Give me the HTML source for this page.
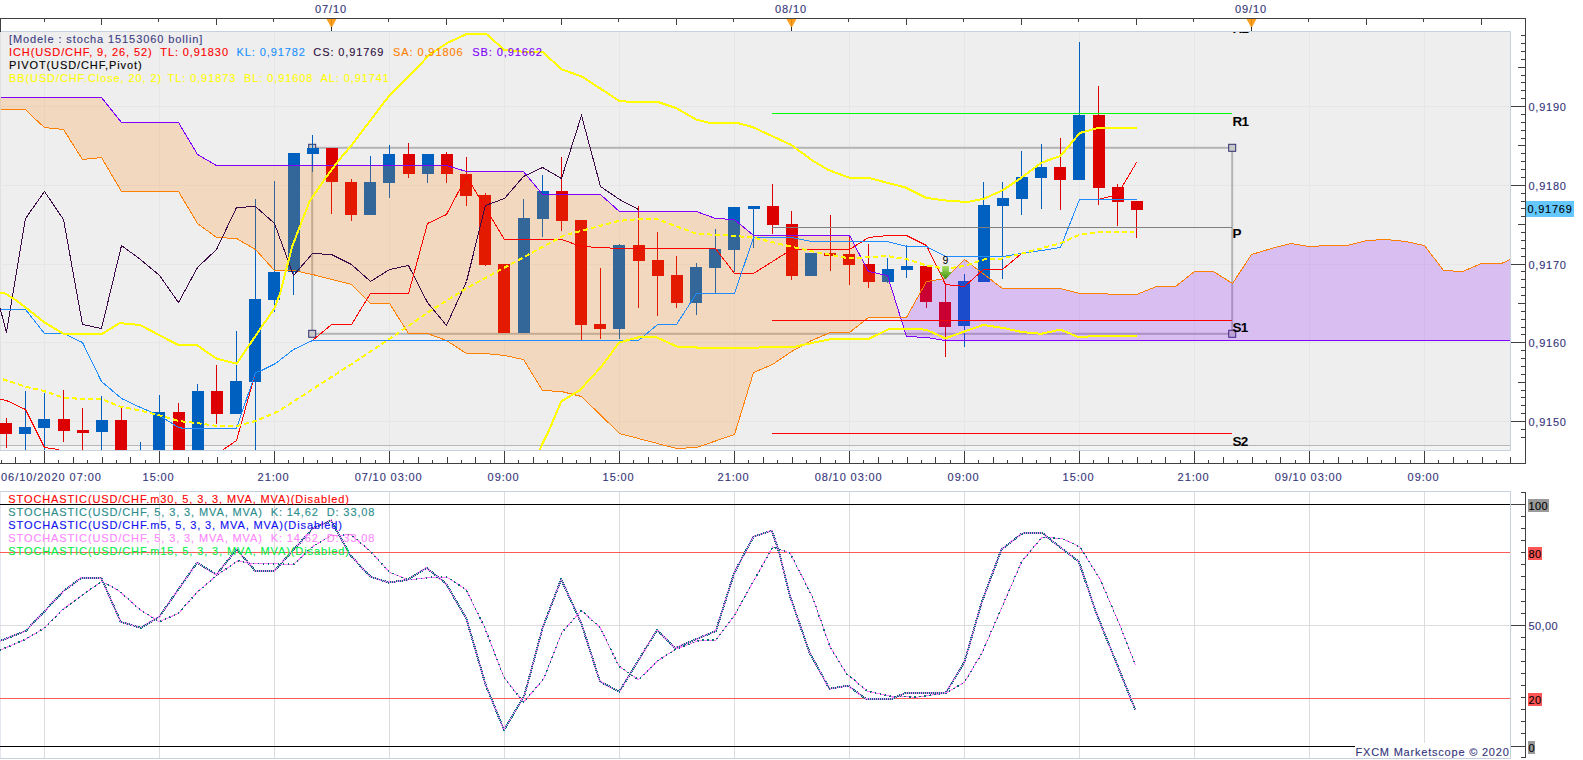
<!DOCTYPE html>
<html><head><meta charset="utf-8"><title>chart</title>
<style>
html,body{margin:0;padding:0;background:#fff;width:1583px;height:760px;overflow:hidden;position:relative}
.t{position:absolute;white-space:pre;font-family:"Liberation Sans",sans-serif;line-height:1;-webkit-text-stroke:0.12px currentColor}
.c{text-align:center}
</style></head><body>
<svg width="1583" height="760" viewBox="0 0 1583 760" style="position:absolute;left:0;top:0" font-family='"Liberation Sans", sans-serif'>
<defs><clipPath id="pc"><rect x="0" y="31" width="1510" height="419"/></clipPath><linearGradient id="ag" x1="0" y1="0" x2="0" y2="1"><stop offset="0" stop-color="#a8e060"/><stop offset="1" stop-color="#3c9010"/></linearGradient></defs>
<rect x="0" y="31" width="1510" height="419" fill="#eeeeee"/>
<rect x="0" y="446" width="1510" height="4" fill="#f4f4f4"/>
<line x1="0.5" y1="32" x2="0.5" y2="450" stroke="#e0e0e0" stroke-width="1"/>
<line x1="44.5" y1="31" x2="44.5" y2="450" stroke="#e6e6e6" stroke-width="1"/>
<line x1="159.5" y1="31" x2="159.5" y2="450" stroke="#e6e6e6" stroke-width="1"/>
<line x1="274.5" y1="31" x2="274.5" y2="450" stroke="#e6e6e6" stroke-width="1"/>
<line x1="389.5" y1="31" x2="389.5" y2="450" stroke="#e6e6e6" stroke-width="1"/>
<line x1="504.5" y1="31" x2="504.5" y2="450" stroke="#e6e6e6" stroke-width="1"/>
<line x1="619.5" y1="31" x2="619.5" y2="450" stroke="#e6e6e6" stroke-width="1"/>
<line x1="734.5" y1="31" x2="734.5" y2="450" stroke="#e6e6e6" stroke-width="1"/>
<line x1="849.5" y1="31" x2="849.5" y2="450" stroke="#e6e6e6" stroke-width="1"/>
<line x1="964.5" y1="31" x2="964.5" y2="450" stroke="#e6e6e6" stroke-width="1"/>
<line x1="1079.5" y1="31" x2="1079.5" y2="450" stroke="#e6e6e6" stroke-width="1"/>
<line x1="1194.5" y1="31" x2="1194.5" y2="450" stroke="#e6e6e6" stroke-width="1"/>
<line x1="1309.5" y1="31" x2="1309.5" y2="450" stroke="#e6e6e6" stroke-width="1"/>
<line x1="1424.5" y1="31" x2="1424.5" y2="450" stroke="#e6e6e6" stroke-width="1"/>
<line x1="0" y1="106.5" x2="1510" y2="106.5" stroke="#e6e6e6" stroke-width="1"/>
<line x1="0" y1="185.5" x2="1510" y2="185.5" stroke="#e6e6e6" stroke-width="1"/>
<line x1="0" y1="264.5" x2="1510" y2="264.5" stroke="#e6e6e6" stroke-width="1"/>
<line x1="0" y1="342.5" x2="1510" y2="342.5" stroke="#e6e6e6" stroke-width="1"/>
<line x1="0" y1="421.5" x2="1510" y2="421.5" stroke="#e6e6e6" stroke-width="1"/>
<line x1="0" y1="445.5" x2="1510" y2="445.5" stroke="#b8b8b8" stroke-width="1"/>
<g clip-path="url(#pc)">
<g stroke="#b4b4b4" stroke-width="2" fill="none"><rect x="312.2" y="147.8" width="920" height="186"/></g>
<rect x="308.7" y="144.3" width="7" height="7" fill="#c8c8c8" stroke="#303070" stroke-width="1"/>
<rect x="1228.7" y="144.3" width="7" height="7" fill="#c8c8c8" stroke="#303070" stroke-width="1"/>
<rect x="308.7" y="330.3" width="7" height="7" fill="#c8c8c8" stroke="#303070" stroke-width="1"/>
<rect x="1228.7" y="330.3" width="7" height="7" fill="#c8c8c8" stroke="#303070" stroke-width="1"/>
<rect x="6" y="418" width="1" height="30" fill="#dd0000"/>
<rect x="0" y="423" width="12" height="11" fill="#dd0000"/>
<rect x="25" y="391" width="1" height="60" fill="#0060c0"/>
<rect x="19" y="427" width="12" height="7" fill="#0060c0"/>
<rect x="44" y="393" width="1" height="58" fill="#0060c0"/>
<rect x="38" y="419" width="12" height="9" fill="#0060c0"/>
<rect x="63" y="390" width="1" height="52" fill="#dd0000"/>
<rect x="58" y="419" width="12" height="12" fill="#dd0000"/>
<rect x="82" y="408" width="1" height="43" fill="#dd0000"/>
<rect x="77" y="430" width="12" height="3" fill="#dd0000"/>
<rect x="101" y="396" width="1" height="55" fill="#0060c0"/>
<rect x="96" y="420" width="12" height="12" fill="#0060c0"/>
<rect x="121" y="408" width="1" height="43" fill="#dd0000"/>
<rect x="115" y="420" width="12" height="31" fill="#dd0000"/>
<rect x="140" y="442" width="1" height="9" fill="#0060c0"/>
<rect x="134" y="451" width="12" height="3" fill="#0060c0"/>
<rect x="159" y="395" width="1" height="56" fill="#0060c0"/>
<rect x="153" y="412" width="12" height="39" fill="#0060c0"/>
<rect x="178" y="403" width="1" height="48" fill="#dd0000"/>
<rect x="173" y="412" width="12" height="39" fill="#dd0000"/>
<rect x="197" y="384" width="1" height="67" fill="#0060c0"/>
<rect x="192" y="391" width="12" height="60" fill="#0060c0"/>
<rect x="216" y="365" width="1" height="59" fill="#dd0000"/>
<rect x="211" y="391" width="12" height="23" fill="#dd0000"/>
<rect x="236" y="331" width="1" height="83" fill="#0060c0"/>
<rect x="230" y="381" width="12" height="33" fill="#0060c0"/>
<rect x="255" y="199" width="1" height="252" fill="#0060c0"/>
<rect x="249" y="299" width="12" height="83" fill="#0060c0"/>
<rect x="274" y="181" width="1" height="131" fill="#0060c0"/>
<rect x="268" y="272" width="12" height="28" fill="#0060c0"/>
<rect x="293" y="153" width="1" height="142" fill="#0060c0"/>
<rect x="288" y="153" width="12" height="119" fill="#0060c0"/>
<rect x="312" y="135" width="1" height="37" fill="#0060c0"/>
<rect x="307" y="148" width="12" height="6" fill="#0060c0"/>
<rect x="331" y="148" width="1" height="66" fill="#dd0000"/>
<rect x="326" y="148" width="12" height="34" fill="#dd0000"/>
<rect x="351" y="179" width="1" height="42" fill="#dd0000"/>
<rect x="345" y="182" width="12" height="33" fill="#dd0000"/>
<rect x="370" y="156" width="1" height="59" fill="#0060c0"/>
<rect x="364" y="182" width="12" height="33" fill="#0060c0"/>
<rect x="389" y="145" width="1" height="53" fill="#0060c0"/>
<rect x="383" y="154" width="12" height="29" fill="#0060c0"/>
<rect x="408" y="143" width="1" height="35" fill="#dd0000"/>
<rect x="403" y="154" width="12" height="20" fill="#dd0000"/>
<rect x="427" y="154" width="1" height="29" fill="#0060c0"/>
<rect x="422" y="154" width="12" height="20" fill="#0060c0"/>
<rect x="446" y="152" width="1" height="31" fill="#dd0000"/>
<rect x="441" y="154" width="12" height="20" fill="#dd0000"/>
<rect x="466" y="157" width="1" height="49" fill="#dd0000"/>
<rect x="460" y="174" width="12" height="22" fill="#dd0000"/>
<rect x="485" y="193" width="1" height="73" fill="#dd0000"/>
<rect x="479" y="195" width="12" height="70" fill="#dd0000"/>
<rect x="504" y="264" width="1" height="69" fill="#dd0000"/>
<rect x="498" y="264" width="12" height="69" fill="#dd0000"/>
<rect x="523" y="199" width="1" height="134" fill="#0060c0"/>
<rect x="518" y="218" width="12" height="115" fill="#0060c0"/>
<rect x="542" y="175" width="1" height="62" fill="#0060c0"/>
<rect x="537" y="191" width="12" height="28" fill="#0060c0"/>
<rect x="561" y="157" width="1" height="74" fill="#dd0000"/>
<rect x="556" y="191" width="12" height="30" fill="#dd0000"/>
<rect x="581" y="220" width="1" height="120" fill="#dd0000"/>
<rect x="575" y="220" width="12" height="105" fill="#dd0000"/>
<rect x="600" y="268" width="1" height="71" fill="#dd0000"/>
<rect x="594" y="324" width="12" height="5" fill="#dd0000"/>
<rect x="619" y="244" width="1" height="95" fill="#0060c0"/>
<rect x="613" y="245" width="12" height="84" fill="#0060c0"/>
<rect x="638" y="206" width="1" height="102" fill="#dd0000"/>
<rect x="633" y="245" width="12" height="16" fill="#dd0000"/>
<rect x="657" y="232" width="1" height="84" fill="#dd0000"/>
<rect x="652" y="260" width="12" height="16" fill="#dd0000"/>
<rect x="676" y="256" width="1" height="52" fill="#dd0000"/>
<rect x="671" y="275" width="12" height="28" fill="#dd0000"/>
<rect x="696" y="263" width="1" height="52" fill="#0060c0"/>
<rect x="690" y="267" width="12" height="36" fill="#0060c0"/>
<rect x="715" y="229" width="1" height="64" fill="#0060c0"/>
<rect x="709" y="249" width="12" height="19" fill="#0060c0"/>
<rect x="734" y="207" width="1" height="65" fill="#0060c0"/>
<rect x="728" y="207" width="12" height="43" fill="#0060c0"/>
<rect x="753" y="207" width="1" height="41" fill="#0060c0"/>
<rect x="748" y="206" width="12" height="3" fill="#0060c0"/>
<rect x="772" y="184" width="1" height="50" fill="#dd0000"/>
<rect x="767" y="206" width="12" height="19" fill="#dd0000"/>
<rect x="791" y="211" width="1" height="69" fill="#dd0000"/>
<rect x="786" y="224" width="12" height="52" fill="#dd0000"/>
<rect x="811" y="253" width="1" height="23" fill="#0060c0"/>
<rect x="805" y="253" width="12" height="23" fill="#0060c0"/>
<rect x="830" y="215" width="1" height="56" fill="#dd0000"/>
<rect x="824" y="253" width="12" height="3" fill="#dd0000"/>
<rect x="849" y="235" width="1" height="50" fill="#dd0000"/>
<rect x="843" y="254" width="12" height="11" fill="#dd0000"/>
<rect x="868" y="244" width="1" height="44" fill="#dd0000"/>
<rect x="863" y="264" width="12" height="18" fill="#dd0000"/>
<rect x="887" y="258" width="1" height="25" fill="#0060c0"/>
<rect x="882" y="269" width="12" height="13" fill="#0060c0"/>
<rect x="906" y="245" width="1" height="33" fill="#0060c0"/>
<rect x="901" y="266" width="12" height="4" fill="#0060c0"/>
<rect x="926" y="266" width="1" height="42" fill="#dd0000"/>
<rect x="920" y="266" width="12" height="36" fill="#dd0000"/>
<rect x="945" y="284" width="1" height="73" fill="#dd0000"/>
<rect x="939" y="302" width="12" height="25" fill="#dd0000"/>
<rect x="964" y="274" width="1" height="73" fill="#0060c0"/>
<rect x="958" y="281" width="12" height="45" fill="#0060c0"/>
<rect x="983" y="182" width="1" height="100" fill="#0060c0"/>
<rect x="978" y="205" width="12" height="77" fill="#0060c0"/>
<rect x="1002" y="182" width="1" height="97" fill="#0060c0"/>
<rect x="997" y="198" width="12" height="8" fill="#0060c0"/>
<rect x="1021" y="151" width="1" height="64" fill="#0060c0"/>
<rect x="1016" y="177" width="12" height="22" fill="#0060c0"/>
<rect x="1041" y="144" width="1" height="65" fill="#0060c0"/>
<rect x="1035" y="167" width="12" height="11" fill="#0060c0"/>
<rect x="1060" y="138" width="1" height="72" fill="#dd0000"/>
<rect x="1054" y="167" width="12" height="13" fill="#dd0000"/>
<rect x="1079" y="42" width="1" height="138" fill="#0060c0"/>
<rect x="1073" y="115" width="12" height="65" fill="#0060c0"/>
<rect x="1098" y="86" width="1" height="119" fill="#dd0000"/>
<rect x="1093" y="115" width="12" height="73" fill="#dd0000"/>
<rect x="1117" y="184" width="1" height="42" fill="#dd0000"/>
<rect x="1112" y="187" width="12" height="15" fill="#dd0000"/>
<rect x="1136" y="201" width="1" height="37" fill="#dd0000"/>
<rect x="1131" y="201" width="12" height="9" fill="#dd0000"/>
<polygon points="0.0,109.0 25.2,109.0 33.2,117.9 44.4,127.5 63.5,129.3 82.7,159.3 101.9,157.5 121.0,191.3 178.6,191.3 197.7,223.5 216.9,237.3 236.1,238.3 255.2,249.9 274.4,270.5 293.6,270.5 312.7,274.2 351.1,284.3 370.2,303.8 389.4,303.3 408.6,333.8 427.7,333.8 446.9,340.6 466.1,353.5 485.2,353.5 504.4,355.4 523.6,359.1 542.7,390.4 561.9,391.5 581.1,396.3 600.2,414.7 619.4,433.1 676.9,448.1 696.1,447.2 715.3,440.6 734.4,434.0 753.6,372.9 772.8,364.0 791.9,351.0 811.1,340.5 830.3,332.4 849.4,332.4 868.6,317.6 887.8,317.6 901.1,317.6 901.1,317.6 887.8,275.1 868.6,271.4 849.4,235.5 830.3,235.5 811.1,235.5 791.9,235.5 772.8,235.5 753.6,235.5 734.4,219.3 715.3,218.6 696.1,211.6 676.9,211.6 619.4,211.6 600.2,194.0 581.1,194.0 561.9,194.0 542.7,194.0 523.6,171.4 504.4,171.4 485.2,171.4 466.1,171.4 446.9,165.5 427.7,165.5 408.6,165.5 389.4,165.5 370.2,165.5 351.1,165.5 312.7,165.5 293.6,165.5 274.4,165.5 255.2,165.5 236.1,165.5 216.9,165.5 197.7,154.7 178.6,122.5 121.0,122.5 101.9,97.6 82.7,97.6 63.5,97.6 44.4,97.6 33.2,97.6 25.2,97.6 0.0,97.6" fill="#ff8000" fill-opacity="0.2"/>
<polygon points="901.1,317.6 906.9,317.6 926.1,281.9 945.3,278.8 964.4,259.4 1002.8,288.9 1060.3,288.9 1079.4,293.0 1098.6,293.5 1117.8,294.4 1137.0,294.4 1156.1,286.2 1175.3,286.2 1194.5,271.4 1213.6,271.4 1232.8,283.0 1252.0,254.3 1271.1,248.8 1290.3,243.8 1309.5,246.2 1328.6,245.1 1347.8,245.1 1367.0,240.1 1386.1,239.2 1405.3,241.0 1424.5,245.6 1443.6,270.5 1462.8,271.4 1482.0,263.5 1501.1,263.5 1510.0,259.1 1510.0,340.1 1501.1,340.1 1482.0,340.1 1462.8,340.1 1443.6,340.1 1424.5,340.1 1405.3,340.1 1386.1,340.1 1367.0,340.1 1347.8,340.1 1328.6,340.1 1309.5,340.1 1290.3,340.1 1271.1,340.1 1252.0,340.1 1232.8,340.1 1213.6,340.1 1194.5,340.1 1175.3,340.1 1156.1,340.1 1137.0,340.1 1117.8,340.1 1098.6,340.1 1079.4,340.1 1060.3,340.1 1002.8,340.1 964.4,340.1 945.3,340.1 926.1,337.0 906.9,336.0 901.1,317.6" fill="#8000ff" fill-opacity="0.2"/>
<polyline points="0.5,97.5 101.5,97.5 121.5,122.5 178.5,122.5 197.5,154.5 216.5,165.5 446.5,165.5 466.5,171.5 523.5,171.5 542.5,194.5 600.5,194.5 619.5,211.5 696.5,211.5 715.5,218.5 734.5,219.5 753.5,235.5 849.5,235.5 868.5,271.5 887.5,275.5 906.5,336.5 926.5,337.5 945.5,340.5 1510.5,340.5" fill="none" stroke="#8000ff" stroke-width="1" shape-rendering="crispEdges"/>
<polyline points="0.5,109.5 25.5,109.5 33.5,117.5 44.5,127.5 63.5,129.5 82.5,159.5 101.5,157.5 121.5,191.5 178.5,191.5 197.5,223.5 216.5,237.5 236.5,238.5 255.5,249.5 274.5,270.5 293.5,270.5 312.5,274.5 351.5,284.5 370.5,303.5 389.5,303.5 408.5,333.5 427.5,333.5 446.5,340.5 466.5,353.5 485.5,353.5 504.5,355.5 523.5,359.5 542.5,390.5 561.5,391.5 581.5,396.5 619.5,433.5 676.5,448.5 696.5,447.5 734.5,434.5 753.5,372.5 772.5,364.5 791.5,351.5 811.5,340.5 830.5,332.5 849.5,332.5 868.5,317.5 906.5,317.5 926.5,281.5 945.5,278.5 964.5,259.5 1002.5,288.5 1060.5,288.5 1079.5,293.5 1098.5,293.5 1117.5,294.5 1136.5,294.5 1156.5,286.5 1175.5,286.5 1194.5,271.5 1213.5,271.5 1232.5,283.5 1251.5,254.5 1271.5,248.5 1290.5,243.5 1309.5,246.5 1328.5,245.5 1347.5,245.5 1366.5,240.5 1386.5,239.5 1405.5,241.5 1424.5,245.5 1443.5,270.5 1462.5,271.5 1481.5,263.5 1501.5,263.5 1510.5,259.5" fill="none" stroke="#ff8000" stroke-width="1" shape-rendering="crispEdges"/>
<polyline points="-12.5,260.5 6.5,332.5 25.5,218.5 44.5,191.5 63.5,219.5 82.5,324.5 101.5,328.5 121.5,245.5 140.5,259.5 159.5,275.5 178.5,302.5 197.5,267.5 216.5,249.5 236.5,207.5 255.5,206.5 265.5,215.5 274.5,223.5 293.5,275.5 312.5,253.5 331.5,254.5 351.5,264.5 370.5,281.5 389.5,269.5 408.5,265.5 427.5,302.5 446.5,325.5 466.5,281.5 485.5,205.5 504.5,198.5 523.5,176.5 542.5,167.5 561.5,178.5 581.5,115.5 600.5,186.5 619.5,199.5 638.5,209.5" fill="none" stroke="#3c0a46" stroke-width="1" shape-rendering="crispEdges"/>
<polyline points="0.5,399.5 6.5,400.5 25.5,409.5 44.5,447.5 58.5,449.5 60.5,452.5 222.5,452.5 223.5,449.5 236.5,440.5 255.5,372.5 261.5,370.5 275.5,363.5 293.5,349.5 312.5,340.5 331.5,324.5 351.5,324.5 370.5,293.5 408.5,293.5 427.5,223.5 446.5,214.5 466.5,176.5 504.5,239.5 561.5,239.5 581.5,246.5 619.5,248.5 715.5,248.5 734.5,273.5 753.5,273.5 791.5,249.5 849.5,249.5 868.5,237.5 887.5,235.5 906.5,235.5 926.5,245.5 945.5,284.5 964.5,286.5 983.5,269.5 1002.5,269.5 1021.5,253.5 1041.5,250.5 1060.5,247.5 1079.5,199.5 1098.5,199.5 1117.5,194.5 1136.5,162.5" fill="none" stroke="#ff0000" stroke-width="1" shape-rendering="crispEdges"/>
<polyline points="0.5,309.5 25.5,309.5 44.5,333.5 63.5,333.5 82.5,342.5 101.5,381.5 121.5,398.5 140.5,407.5 159.5,415.5 178.5,427.5 184.5,428.5 236.5,428.5 255.5,372.5 261.5,370.5 275.5,363.5 293.5,349.5 312.5,340.5 638.5,340.5 657.5,324.5 676.5,324.5 696.5,293.5 734.5,293.5 753.5,237.5 791.5,237.5 811.5,241.5 887.5,241.5 906.5,246.5 926.5,246.5 945.5,256.5 1002.5,256.5 1021.5,253.5 1041.5,250.5 1060.5,247.5 1079.5,199.5 1136.5,199.5" fill="none" stroke="#1e8cff" stroke-width="1" shape-rendering="crispEdges"/>
<polyline points="0.0,292.6 5.5,293.6 15.6,300.0 25.8,307.5 44.2,322.2 63.5,333.8 102.2,333.8 119.7,323.1 140.0,325.0 159.3,335.1 178.6,345.2 197.0,345.2 216.4,358.5 236.7,363.7 256.0,335.1 274.4,308.4 280.0,293.7 292.1,246.6 309.6,201.4 325.2,178.4 339.0,160.0 351.0,145.9 388.8,96.2 421.0,63.9 428.4,55.6 447.8,42.7 467.0,33.9 486.4,33.9 504.0,49.7 522.0,51.6 542.6,52.0 561.7,69.4 581.4,76.3 619.2,100.8 628.4,101.7 657.0,101.7 676.3,108.1 696.5,119.7 711.3,123.4 739.0,123.4 752.7,127.1 791.4,145.0 811.6,160.0 828.4,170.0 848.7,177.5 867.1,177.5 905.8,187.6 926.0,197.8 945.4,200.5 967.5,202.0 984.0,198.7 1002.4,190.4 1021.8,177.5 1041.1,162.8 1060.5,156.0 1079.8,133.0 1098.4,127.8 1136.7,127.8" fill="none" stroke="#ffff00" stroke-width="2" shape-rendering="crispEdges"/>
<polyline points="537.0,455.0 549.2,430.0 561.2,401.4 579.6,390.4 600.8,367.3 619.2,342.5 639.4,337.0 656.0,337.0 677.2,346.7 696.5,347.5 759.2,347.5 796.0,346.5 812.0,343.0 831.0,339.0 868.9,338.8 889.2,329.0 905.8,329.0 926.0,329.6 945.4,338.3 964.7,331.4 983.1,325.0 1002.4,327.8 1021.8,332.0 1041.1,333.8 1060.5,329.6 1078.0,337.0 1098.4,336.0 1136.7,336.0" fill="none" stroke="#ffff00" stroke-width="2" shape-rendering="crispEdges"/>
<polyline points="2.8,379.3 25.8,386.7 44.2,391.0 63.5,397.7 82.9,399.0 101.3,399.0 119.7,406.4 140.0,410.6 159.3,415.2 178.6,421.1 197.0,423.0 216.4,425.9 237.6,425.9 256.0,420.8 278.0,411.5 317.9,385.8 356.6,360.9 389.7,338.8 428.4,312.1 447.7,300.0 463.4,290.0 550.0,242.9 564.0,235.5 619.2,220.8 640.4,219.0 657.9,219.5 696.5,233.7 734.3,235.9 753.6,237.7 786.8,245.6 820.0,253.0 830.3,254.8 849.6,258.5 887.3,256.1 907.6,259.4 926.0,265.3 945.4,268.7 964.7,265.9 984.0,259.4 1002.4,258.5 1021.8,253.6 1060.5,243.2 1079.8,234.7 1098.4,232.1 1134.3,232.1" fill="none" stroke="#ffff00" stroke-width="2" stroke-dasharray="5,3" shape-rendering="crispEdges"/>
<line x1="772" y1="113.5" x2="1232" y2="113.5" stroke="#00ff00" stroke-width="1"/>
<line x1="772" y1="227.5" x2="1232" y2="227.5" stroke="#808080" stroke-width="1"/>
<line x1="772" y1="320.5" x2="1232" y2="320.5" stroke="#ff0000" stroke-width="1"/>
<line x1="772" y1="433.5" x2="1232" y2="433.5" stroke="#ff0000" stroke-width="1"/>
<path d="M942.2,266 H948.9 V272 H952.1 L945.5,279.5 L939,272 H942.2 Z" fill="url(#ag)"/>
</g>
<text x="1232.5" y="126" font-size="13.5" font-weight="bold" fill="#000" letter-spacing="-0.7">R1</text>
<text x="1232.5" y="238.3" font-size="13.5" font-weight="bold" fill="#000" letter-spacing="-0.7">P</text>
<text x="1232.5" y="332" font-size="13.5" font-weight="bold" fill="#000" letter-spacing="-0.7">S1</text>
<text x="1232.5" y="445.9" font-size="13.5" font-weight="bold" fill="#000" letter-spacing="-0.7">S2</text>
<text x="1232.5" y="33" font-size="13.5" font-weight="bold" fill="#000" letter-spacing="-0.7" clip-path="url(#pc)">R2</text>
<text x="942.5" y="263.7" font-size="10.5" fill="#000">9</text>
<path d="M0,31.5 H1510.5 V450.5 H0" fill="none" stroke="#c5d1de" stroke-width="1"/>
<line x1="0" y1="18.5" x2="1526" y2="18.5" stroke="#404040" stroke-width="1"/>
<line x1="0.5" y1="18" x2="0.5" y2="32" stroke="#404040" stroke-width="1"/>
<line x1="44.5" y1="18" x2="44.5" y2="22" stroke="#404040" stroke-width="1"/>
<line x1="101.5" y1="18" x2="101.5" y2="25" stroke="#404040" stroke-width="1"/>
<line x1="158.5" y1="18" x2="158.5" y2="22" stroke="#404040" stroke-width="1"/>
<line x1="216.5" y1="18" x2="216.5" y2="25" stroke="#404040" stroke-width="1"/>
<line x1="273.5" y1="18" x2="273.5" y2="22" stroke="#404040" stroke-width="1"/>
<path d="M326.5,19 H336.5 L331.5,28 Z" fill="#ffa020"/>
<line x1="331.5" y1="19" x2="331.5" y2="31" stroke="#303030" stroke-width="1"/>
<line x1="331.5" y1="19" x2="331.5" y2="27" stroke="#e08a10" stroke-width="1"/>
<line x1="388.5" y1="18" x2="388.5" y2="22" stroke="#404040" stroke-width="1"/>
<line x1="446.5" y1="18" x2="446.5" y2="25" stroke="#404040" stroke-width="1"/>
<line x1="503.5" y1="18" x2="503.5" y2="22" stroke="#404040" stroke-width="1"/>
<line x1="561.5" y1="18" x2="561.5" y2="25" stroke="#404040" stroke-width="1"/>
<line x1="618.5" y1="18" x2="618.5" y2="22" stroke="#404040" stroke-width="1"/>
<line x1="676.5" y1="18" x2="676.5" y2="25" stroke="#404040" stroke-width="1"/>
<line x1="733.5" y1="18" x2="733.5" y2="22" stroke="#404040" stroke-width="1"/>
<path d="M786.5,19 H796.5 L791.5,28 Z" fill="#ffa020"/>
<line x1="791.5" y1="19" x2="791.5" y2="31" stroke="#303030" stroke-width="1"/>
<line x1="791.5" y1="19" x2="791.5" y2="27" stroke="#e08a10" stroke-width="1"/>
<line x1="848.5" y1="18" x2="848.5" y2="22" stroke="#404040" stroke-width="1"/>
<line x1="906.5" y1="18" x2="906.5" y2="25" stroke="#404040" stroke-width="1"/>
<line x1="963.5" y1="18" x2="963.5" y2="22" stroke="#404040" stroke-width="1"/>
<line x1="1021.5" y1="18" x2="1021.5" y2="25" stroke="#404040" stroke-width="1"/>
<line x1="1078.5" y1="18" x2="1078.5" y2="22" stroke="#404040" stroke-width="1"/>
<line x1="1136.5" y1="18" x2="1136.5" y2="25" stroke="#404040" stroke-width="1"/>
<line x1="1193.5" y1="18" x2="1193.5" y2="22" stroke="#404040" stroke-width="1"/>
<path d="M1246.5,19 H1256.5 L1251.5,28 Z" fill="#ffa020"/>
<line x1="1251.5" y1="19" x2="1251.5" y2="31" stroke="#303030" stroke-width="1"/>
<line x1="1251.5" y1="19" x2="1251.5" y2="27" stroke="#e08a10" stroke-width="1"/>
<line x1="1308.5" y1="18" x2="1308.5" y2="22" stroke="#404040" stroke-width="1"/>
<line x1="1366.5" y1="18" x2="1366.5" y2="25" stroke="#404040" stroke-width="1"/>
<line x1="1423.5" y1="18" x2="1423.5" y2="22" stroke="#404040" stroke-width="1"/>
<line x1="1481.5" y1="18" x2="1481.5" y2="25" stroke="#404040" stroke-width="1"/>
<line x1="1525.5" y1="18" x2="1525.5" y2="464" stroke="#404040" stroke-width="1"/>
<line x1="1521" y1="35.5" x2="1525" y2="35.5" stroke="#404040" stroke-width="1"/>
<line x1="1521" y1="43.5" x2="1525" y2="43.5" stroke="#404040" stroke-width="1"/>
<line x1="1521" y1="51.5" x2="1525" y2="51.5" stroke="#404040" stroke-width="1"/>
<line x1="1521" y1="59.5" x2="1525" y2="59.5" stroke="#404040" stroke-width="1"/>
<line x1="1518" y1="67.5" x2="1525" y2="67.5" stroke="#404040" stroke-width="1"/>
<line x1="1521" y1="75.5" x2="1525" y2="75.5" stroke="#404040" stroke-width="1"/>
<line x1="1521" y1="82.5" x2="1525" y2="82.5" stroke="#404040" stroke-width="1"/>
<line x1="1521" y1="90.5" x2="1525" y2="90.5" stroke="#404040" stroke-width="1"/>
<line x1="1521" y1="98.5" x2="1525" y2="98.5" stroke="#404040" stroke-width="1"/>
<line x1="1511" y1="106.5" x2="1525" y2="106.5" stroke="#404040" stroke-width="1"/>
<line x1="1521" y1="114.5" x2="1525" y2="114.5" stroke="#404040" stroke-width="1"/>
<line x1="1521" y1="122.5" x2="1525" y2="122.5" stroke="#404040" stroke-width="1"/>
<line x1="1521" y1="130.5" x2="1525" y2="130.5" stroke="#404040" stroke-width="1"/>
<line x1="1521" y1="138.5" x2="1525" y2="138.5" stroke="#404040" stroke-width="1"/>
<line x1="1518" y1="145.5" x2="1525" y2="145.5" stroke="#404040" stroke-width="1"/>
<line x1="1521" y1="153.5" x2="1525" y2="153.5" stroke="#404040" stroke-width="1"/>
<line x1="1521" y1="161.5" x2="1525" y2="161.5" stroke="#404040" stroke-width="1"/>
<line x1="1521" y1="169.5" x2="1525" y2="169.5" stroke="#404040" stroke-width="1"/>
<line x1="1521" y1="177.5" x2="1525" y2="177.5" stroke="#404040" stroke-width="1"/>
<line x1="1511" y1="185.5" x2="1525" y2="185.5" stroke="#404040" stroke-width="1"/>
<line x1="1521" y1="193.5" x2="1525" y2="193.5" stroke="#404040" stroke-width="1"/>
<line x1="1521" y1="201.5" x2="1525" y2="201.5" stroke="#404040" stroke-width="1"/>
<line x1="1521" y1="208.5" x2="1525" y2="208.5" stroke="#404040" stroke-width="1"/>
<line x1="1521" y1="216.5" x2="1525" y2="216.5" stroke="#404040" stroke-width="1"/>
<line x1="1518" y1="224.5" x2="1525" y2="224.5" stroke="#404040" stroke-width="1"/>
<line x1="1521" y1="232.5" x2="1525" y2="232.5" stroke="#404040" stroke-width="1"/>
<line x1="1521" y1="240.5" x2="1525" y2="240.5" stroke="#404040" stroke-width="1"/>
<line x1="1521" y1="248.5" x2="1525" y2="248.5" stroke="#404040" stroke-width="1"/>
<line x1="1521" y1="256.5" x2="1525" y2="256.5" stroke="#404040" stroke-width="1"/>
<line x1="1511" y1="264.5" x2="1525" y2="264.5" stroke="#404040" stroke-width="1"/>
<line x1="1521" y1="271.5" x2="1525" y2="271.5" stroke="#404040" stroke-width="1"/>
<line x1="1521" y1="279.5" x2="1525" y2="279.5" stroke="#404040" stroke-width="1"/>
<line x1="1521" y1="287.5" x2="1525" y2="287.5" stroke="#404040" stroke-width="1"/>
<line x1="1521" y1="295.5" x2="1525" y2="295.5" stroke="#404040" stroke-width="1"/>
<line x1="1518" y1="303.5" x2="1525" y2="303.5" stroke="#404040" stroke-width="1"/>
<line x1="1521" y1="311.5" x2="1525" y2="311.5" stroke="#404040" stroke-width="1"/>
<line x1="1521" y1="319.5" x2="1525" y2="319.5" stroke="#404040" stroke-width="1"/>
<line x1="1521" y1="327.5" x2="1525" y2="327.5" stroke="#404040" stroke-width="1"/>
<line x1="1521" y1="334.5" x2="1525" y2="334.5" stroke="#404040" stroke-width="1"/>
<line x1="1511" y1="342.5" x2="1525" y2="342.5" stroke="#404040" stroke-width="1"/>
<line x1="1521" y1="350.5" x2="1525" y2="350.5" stroke="#404040" stroke-width="1"/>
<line x1="1521" y1="358.5" x2="1525" y2="358.5" stroke="#404040" stroke-width="1"/>
<line x1="1521" y1="366.5" x2="1525" y2="366.5" stroke="#404040" stroke-width="1"/>
<line x1="1521" y1="374.5" x2="1525" y2="374.5" stroke="#404040" stroke-width="1"/>
<line x1="1518" y1="382.5" x2="1525" y2="382.5" stroke="#404040" stroke-width="1"/>
<line x1="1521" y1="390.5" x2="1525" y2="390.5" stroke="#404040" stroke-width="1"/>
<line x1="1521" y1="397.5" x2="1525" y2="397.5" stroke="#404040" stroke-width="1"/>
<line x1="1521" y1="405.5" x2="1525" y2="405.5" stroke="#404040" stroke-width="1"/>
<line x1="1521" y1="413.5" x2="1525" y2="413.5" stroke="#404040" stroke-width="1"/>
<line x1="1511" y1="421.5" x2="1525" y2="421.5" stroke="#404040" stroke-width="1"/>
<line x1="1521" y1="429.5" x2="1525" y2="429.5" stroke="#404040" stroke-width="1"/>
<line x1="1521" y1="437.5" x2="1525" y2="437.5" stroke="#404040" stroke-width="1"/>
<line x1="0" y1="463.5" x2="1526" y2="463.5" stroke="#404040" stroke-width="1"/>
<line x1="1.5" y1="460" x2="1.5" y2="463" stroke="#404040" stroke-width="1"/>
<line x1="15.5" y1="457" x2="15.5" y2="463" stroke="#404040" stroke-width="1"/>
<line x1="30.5" y1="460" x2="30.5" y2="463" stroke="#404040" stroke-width="1"/>
<line x1="44.5" y1="451" x2="44.5" y2="463" stroke="#404040" stroke-width="1"/>
<line x1="58.5" y1="460" x2="58.5" y2="463" stroke="#404040" stroke-width="1"/>
<line x1="73.5" y1="457" x2="73.5" y2="463" stroke="#404040" stroke-width="1"/>
<line x1="87.5" y1="460" x2="87.5" y2="463" stroke="#404040" stroke-width="1"/>
<line x1="102.5" y1="457" x2="102.5" y2="463" stroke="#404040" stroke-width="1"/>
<line x1="116.5" y1="460" x2="116.5" y2="463" stroke="#404040" stroke-width="1"/>
<line x1="130.5" y1="457" x2="130.5" y2="463" stroke="#404040" stroke-width="1"/>
<line x1="145.5" y1="460" x2="145.5" y2="463" stroke="#404040" stroke-width="1"/>
<line x1="159.5" y1="451" x2="159.5" y2="463" stroke="#404040" stroke-width="1"/>
<line x1="173.5" y1="460" x2="173.5" y2="463" stroke="#404040" stroke-width="1"/>
<line x1="188.5" y1="457" x2="188.5" y2="463" stroke="#404040" stroke-width="1"/>
<line x1="202.5" y1="460" x2="202.5" y2="463" stroke="#404040" stroke-width="1"/>
<line x1="217.5" y1="457" x2="217.5" y2="463" stroke="#404040" stroke-width="1"/>
<line x1="231.5" y1="460" x2="231.5" y2="463" stroke="#404040" stroke-width="1"/>
<line x1="245.5" y1="457" x2="245.5" y2="463" stroke="#404040" stroke-width="1"/>
<line x1="260.5" y1="460" x2="260.5" y2="463" stroke="#404040" stroke-width="1"/>
<line x1="274.5" y1="451" x2="274.5" y2="463" stroke="#404040" stroke-width="1"/>
<line x1="288.5" y1="460" x2="288.5" y2="463" stroke="#404040" stroke-width="1"/>
<line x1="303.5" y1="457" x2="303.5" y2="463" stroke="#404040" stroke-width="1"/>
<line x1="317.5" y1="460" x2="317.5" y2="463" stroke="#404040" stroke-width="1"/>
<line x1="332.5" y1="457" x2="332.5" y2="463" stroke="#404040" stroke-width="1"/>
<line x1="346.5" y1="460" x2="346.5" y2="463" stroke="#404040" stroke-width="1"/>
<line x1="360.5" y1="457" x2="360.5" y2="463" stroke="#404040" stroke-width="1"/>
<line x1="375.5" y1="460" x2="375.5" y2="463" stroke="#404040" stroke-width="1"/>
<line x1="389.5" y1="451" x2="389.5" y2="463" stroke="#404040" stroke-width="1"/>
<line x1="403.5" y1="460" x2="403.5" y2="463" stroke="#404040" stroke-width="1"/>
<line x1="418.5" y1="457" x2="418.5" y2="463" stroke="#404040" stroke-width="1"/>
<line x1="432.5" y1="460" x2="432.5" y2="463" stroke="#404040" stroke-width="1"/>
<line x1="447.5" y1="457" x2="447.5" y2="463" stroke="#404040" stroke-width="1"/>
<line x1="461.5" y1="460" x2="461.5" y2="463" stroke="#404040" stroke-width="1"/>
<line x1="475.5" y1="457" x2="475.5" y2="463" stroke="#404040" stroke-width="1"/>
<line x1="490.5" y1="460" x2="490.5" y2="463" stroke="#404040" stroke-width="1"/>
<line x1="504.5" y1="451" x2="504.5" y2="463" stroke="#404040" stroke-width="1"/>
<line x1="518.5" y1="460" x2="518.5" y2="463" stroke="#404040" stroke-width="1"/>
<line x1="533.5" y1="457" x2="533.5" y2="463" stroke="#404040" stroke-width="1"/>
<line x1="547.5" y1="460" x2="547.5" y2="463" stroke="#404040" stroke-width="1"/>
<line x1="562.5" y1="457" x2="562.5" y2="463" stroke="#404040" stroke-width="1"/>
<line x1="576.5" y1="460" x2="576.5" y2="463" stroke="#404040" stroke-width="1"/>
<line x1="590.5" y1="457" x2="590.5" y2="463" stroke="#404040" stroke-width="1"/>
<line x1="605.5" y1="460" x2="605.5" y2="463" stroke="#404040" stroke-width="1"/>
<line x1="619.5" y1="451" x2="619.5" y2="463" stroke="#404040" stroke-width="1"/>
<line x1="633.5" y1="460" x2="633.5" y2="463" stroke="#404040" stroke-width="1"/>
<line x1="648.5" y1="457" x2="648.5" y2="463" stroke="#404040" stroke-width="1"/>
<line x1="662.5" y1="460" x2="662.5" y2="463" stroke="#404040" stroke-width="1"/>
<line x1="677.5" y1="457" x2="677.5" y2="463" stroke="#404040" stroke-width="1"/>
<line x1="691.5" y1="460" x2="691.5" y2="463" stroke="#404040" stroke-width="1"/>
<line x1="705.5" y1="457" x2="705.5" y2="463" stroke="#404040" stroke-width="1"/>
<line x1="720.5" y1="460" x2="720.5" y2="463" stroke="#404040" stroke-width="1"/>
<line x1="734.5" y1="451" x2="734.5" y2="463" stroke="#404040" stroke-width="1"/>
<line x1="748.5" y1="460" x2="748.5" y2="463" stroke="#404040" stroke-width="1"/>
<line x1="763.5" y1="457" x2="763.5" y2="463" stroke="#404040" stroke-width="1"/>
<line x1="777.5" y1="460" x2="777.5" y2="463" stroke="#404040" stroke-width="1"/>
<line x1="792.5" y1="457" x2="792.5" y2="463" stroke="#404040" stroke-width="1"/>
<line x1="806.5" y1="460" x2="806.5" y2="463" stroke="#404040" stroke-width="1"/>
<line x1="820.5" y1="457" x2="820.5" y2="463" stroke="#404040" stroke-width="1"/>
<line x1="835.5" y1="460" x2="835.5" y2="463" stroke="#404040" stroke-width="1"/>
<line x1="849.5" y1="451" x2="849.5" y2="463" stroke="#404040" stroke-width="1"/>
<line x1="863.5" y1="460" x2="863.5" y2="463" stroke="#404040" stroke-width="1"/>
<line x1="878.5" y1="457" x2="878.5" y2="463" stroke="#404040" stroke-width="1"/>
<line x1="892.5" y1="460" x2="892.5" y2="463" stroke="#404040" stroke-width="1"/>
<line x1="907.5" y1="457" x2="907.5" y2="463" stroke="#404040" stroke-width="1"/>
<line x1="921.5" y1="460" x2="921.5" y2="463" stroke="#404040" stroke-width="1"/>
<line x1="935.5" y1="457" x2="935.5" y2="463" stroke="#404040" stroke-width="1"/>
<line x1="950.5" y1="460" x2="950.5" y2="463" stroke="#404040" stroke-width="1"/>
<line x1="964.5" y1="451" x2="964.5" y2="463" stroke="#404040" stroke-width="1"/>
<line x1="978.5" y1="460" x2="978.5" y2="463" stroke="#404040" stroke-width="1"/>
<line x1="993.5" y1="457" x2="993.5" y2="463" stroke="#404040" stroke-width="1"/>
<line x1="1007.5" y1="460" x2="1007.5" y2="463" stroke="#404040" stroke-width="1"/>
<line x1="1022.5" y1="457" x2="1022.5" y2="463" stroke="#404040" stroke-width="1"/>
<line x1="1036.5" y1="460" x2="1036.5" y2="463" stroke="#404040" stroke-width="1"/>
<line x1="1050.5" y1="457" x2="1050.5" y2="463" stroke="#404040" stroke-width="1"/>
<line x1="1065.5" y1="460" x2="1065.5" y2="463" stroke="#404040" stroke-width="1"/>
<line x1="1079.5" y1="451" x2="1079.5" y2="463" stroke="#404040" stroke-width="1"/>
<line x1="1093.5" y1="460" x2="1093.5" y2="463" stroke="#404040" stroke-width="1"/>
<line x1="1108.5" y1="457" x2="1108.5" y2="463" stroke="#404040" stroke-width="1"/>
<line x1="1122.5" y1="460" x2="1122.5" y2="463" stroke="#404040" stroke-width="1"/>
<line x1="1137.5" y1="457" x2="1137.5" y2="463" stroke="#404040" stroke-width="1"/>
<line x1="1151.5" y1="460" x2="1151.5" y2="463" stroke="#404040" stroke-width="1"/>
<line x1="1165.5" y1="457" x2="1165.5" y2="463" stroke="#404040" stroke-width="1"/>
<line x1="1180.5" y1="460" x2="1180.5" y2="463" stroke="#404040" stroke-width="1"/>
<line x1="1194.5" y1="451" x2="1194.5" y2="463" stroke="#404040" stroke-width="1"/>
<line x1="1208.5" y1="460" x2="1208.5" y2="463" stroke="#404040" stroke-width="1"/>
<line x1="1223.5" y1="457" x2="1223.5" y2="463" stroke="#404040" stroke-width="1"/>
<line x1="1237.5" y1="460" x2="1237.5" y2="463" stroke="#404040" stroke-width="1"/>
<line x1="1252.5" y1="457" x2="1252.5" y2="463" stroke="#404040" stroke-width="1"/>
<line x1="1266.5" y1="460" x2="1266.5" y2="463" stroke="#404040" stroke-width="1"/>
<line x1="1280.5" y1="457" x2="1280.5" y2="463" stroke="#404040" stroke-width="1"/>
<line x1="1295.5" y1="460" x2="1295.5" y2="463" stroke="#404040" stroke-width="1"/>
<line x1="1309.5" y1="451" x2="1309.5" y2="463" stroke="#404040" stroke-width="1"/>
<line x1="1323.5" y1="460" x2="1323.5" y2="463" stroke="#404040" stroke-width="1"/>
<line x1="1338.5" y1="457" x2="1338.5" y2="463" stroke="#404040" stroke-width="1"/>
<line x1="1352.5" y1="460" x2="1352.5" y2="463" stroke="#404040" stroke-width="1"/>
<line x1="1367.5" y1="457" x2="1367.5" y2="463" stroke="#404040" stroke-width="1"/>
<line x1="1381.5" y1="460" x2="1381.5" y2="463" stroke="#404040" stroke-width="1"/>
<line x1="1395.5" y1="457" x2="1395.5" y2="463" stroke="#404040" stroke-width="1"/>
<line x1="1410.5" y1="460" x2="1410.5" y2="463" stroke="#404040" stroke-width="1"/>
<line x1="1424.5" y1="451" x2="1424.5" y2="463" stroke="#404040" stroke-width="1"/>
<line x1="1438.5" y1="460" x2="1438.5" y2="463" stroke="#404040" stroke-width="1"/>
<line x1="1453.5" y1="457" x2="1453.5" y2="463" stroke="#404040" stroke-width="1"/>
<line x1="1467.5" y1="460" x2="1467.5" y2="463" stroke="#404040" stroke-width="1"/>
<line x1="1482.5" y1="457" x2="1482.5" y2="463" stroke="#404040" stroke-width="1"/>
<line x1="1496.5" y1="460" x2="1496.5" y2="463" stroke="#404040" stroke-width="1"/>
<line x1="1510.5" y1="457" x2="1510.5" y2="463" stroke="#404040" stroke-width="1"/>
<rect x="0" y="491.5" width="1510.5" height="267" fill="#ffffff" stroke="#c5d1de" stroke-width="1"/>
<line x1="44.5" y1="492" x2="44.5" y2="758" stroke="#dcdcdc" stroke-width="1"/>
<line x1="159.5" y1="492" x2="159.5" y2="758" stroke="#dcdcdc" stroke-width="1"/>
<line x1="274.5" y1="492" x2="274.5" y2="758" stroke="#dcdcdc" stroke-width="1"/>
<line x1="389.5" y1="492" x2="389.5" y2="758" stroke="#dcdcdc" stroke-width="1"/>
<line x1="504.5" y1="492" x2="504.5" y2="758" stroke="#dcdcdc" stroke-width="1"/>
<line x1="619.5" y1="492" x2="619.5" y2="758" stroke="#dcdcdc" stroke-width="1"/>
<line x1="734.5" y1="492" x2="734.5" y2="758" stroke="#dcdcdc" stroke-width="1"/>
<line x1="849.5" y1="492" x2="849.5" y2="758" stroke="#dcdcdc" stroke-width="1"/>
<line x1="964.5" y1="492" x2="964.5" y2="758" stroke="#dcdcdc" stroke-width="1"/>
<line x1="1079.5" y1="492" x2="1079.5" y2="758" stroke="#dcdcdc" stroke-width="1"/>
<line x1="1194.5" y1="492" x2="1194.5" y2="758" stroke="#dcdcdc" stroke-width="1"/>
<line x1="1309.5" y1="492" x2="1309.5" y2="758" stroke="#dcdcdc" stroke-width="1"/>
<line x1="1424.5" y1="492" x2="1424.5" y2="758" stroke="#dcdcdc" stroke-width="1"/>
<line x1="0" y1="625.5" x2="1510" y2="625.5" stroke="#dcdcdc" stroke-width="1"/>
<line x1="0" y1="504.5" x2="1510" y2="504.5" stroke="#000" stroke-width="1"/>
<line x1="0" y1="746.5" x2="1510" y2="746.5" stroke="#000" stroke-width="1"/>
<line x1="0" y1="552.5" x2="1510" y2="552.5" stroke="#ff5a5a" stroke-width="1"/>
<line x1="0" y1="698.5" x2="1510" y2="698.5" stroke="#ff5a5a" stroke-width="1"/>
<polyline points="0.0,650.2 25.8,639.2 44.2,628.1 63.5,608.8 81.0,595.9 101.3,581.7 110.5,585.8 120.6,592.2 140.0,609.7 159.3,621.7 178.6,613.4 197.0,592.2 216.4,575.7 237.6,560.9 245.0,562.2 255.0,563.7 294.0,564.2 312.4,546.7 330.8,535.7 351.0,534.7 370.4,551.3 389.7,572.5 409.0,579.9 432.0,577.1 446.8,577.1 466.1,589.6 484.7,627.6 504.0,677.3 523.4,702.2 543.6,679.2 562.0,632.2 581.4,610.6 599.9,627.2 619.2,666.4 638.5,679.7 657.8,660.8 675.4,649.3 700.2,640.1 715.9,640.1 734.1,615.9 772.7,546.8 790.2,553.3 812.3,596.6 829.7,646.0 846.3,673.7 867.5,691.2 890.5,696.1 916.3,697.2 945.7,693.0 964.2,682.5 981.7,653.4 1001.4,608.5 1021.7,561.6 1042.0,537.3 1062.2,538.5 1079.7,546.8 1100.0,579.1 1120.2,626.0 1135.5,665.1" fill="none" stroke="#ff80ff" stroke-width="1" shape-rendering="crispEdges"/>
<polyline points="0.0,650.2 25.8,639.2 44.2,628.1 63.5,608.8 81.0,595.9 101.3,581.7 110.5,585.8 120.6,592.2 140.0,609.7 159.3,621.7 178.6,613.4 197.0,592.2 216.4,575.7 237.6,560.9 245.0,562.2 255.0,563.7 294.0,564.2 312.4,546.7 330.8,535.7 351.0,534.7 370.4,551.3 389.7,572.5 409.0,579.9 432.0,577.1 446.8,577.1 466.1,589.6 484.7,627.6 504.0,677.3 523.4,702.2 543.6,679.2 562.0,632.2 581.4,610.6 599.9,627.2 619.2,666.4 638.5,679.7 657.8,660.8 675.4,649.3 700.2,640.1 715.9,640.1 734.1,615.9 772.7,546.8 790.2,553.3 812.3,596.6 829.7,646.0 846.3,673.7 867.5,691.2 890.5,696.1 916.3,697.2 945.7,693.0 964.2,682.5 981.7,653.4 1001.4,608.5 1021.7,561.6 1042.0,537.3 1062.2,538.5 1079.7,546.8 1100.0,579.1 1120.2,626.0 1135.5,665.1" fill="none" stroke="#007070" stroke-width="1.5" stroke-dasharray="1.5,3.5" shape-rendering="crispEdges"/>
<polyline points="0.0,641.0 25.8,630.9 44.2,611.6 63.5,591.0 81.0,578.0 101.3,578.0 120.6,621.7 140.9,627.8 159.3,616.7 197.0,562.7 216.4,574.7 236.6,549.3 255.0,570.7 274.6,570.6 313.3,528.0 331.0,520.4 350.1,555.0 370.4,576.7 388.8,582.6 407.2,579.9 426.5,567.9 445.9,583.5 466.3,618.4 485.6,684.7 504.0,729.8 524.3,695.8 542.7,627.6 561.2,579.3 581.4,623.5 599.9,681.5 619.2,691.7 657.0,630.0 675.4,648.0 715.9,630.9 734.3,572.7 753.4,536.7 771.8,530.6 779.2,552.4 790.2,596.6 809.5,652.5 829.4,688.8 848.1,685.6 866.6,699.4 890.5,699.4 905.2,693.0 945.7,693.0 964.2,662.6 982.1,601.2 1001.4,549.6 1021.7,533.6 1042.0,532.5 1046.6,536.7 1078.8,561.6 1096.3,613.1 1135.5,710.2" fill="none" stroke="#007878" stroke-width="2" shape-rendering="crispEdges"/>
<polyline points="0.0,641.0 25.8,630.9 44.2,611.6 63.5,591.0 81.0,578.0 101.3,578.0 120.6,621.7 140.9,627.8 159.3,616.7 197.0,562.7 216.4,574.7 236.6,549.3 255.0,570.7 274.6,570.6 313.3,528.0 331.0,520.4 350.1,555.0 370.4,576.7 388.8,582.6 407.2,579.9 426.5,567.9 445.9,583.5 466.3,618.4 485.6,684.7 504.0,729.8 524.3,695.8 542.7,627.6 561.2,579.3 581.4,623.5 599.9,681.5 619.2,691.7 657.0,630.0 675.4,648.0 715.9,630.9 734.3,572.7 753.4,536.7 771.8,530.6 779.2,552.4 790.2,596.6 809.5,652.5 829.4,688.8 848.1,685.6 866.6,699.4 890.5,699.4 905.2,693.0 945.7,693.0 964.2,662.6 982.1,601.2 1001.4,549.6 1021.7,533.6 1042.0,532.5 1046.6,536.7 1078.8,561.6 1096.3,613.1 1135.5,710.2" fill="none" stroke="#ff80ff" stroke-width="2" stroke-dasharray="1,1" shape-rendering="crispEdges"/>
<line x1="1525.5" y1="492" x2="1525.5" y2="758" stroke="#404040" stroke-width="1"/>
<line x1="1521" y1="492.5" x2="1525" y2="492.5" stroke="#404040" stroke-width="1"/>
<line x1="1511" y1="504.5" x2="1525" y2="504.5" stroke="#404040" stroke-width="1"/>
<line x1="1521" y1="516.5" x2="1525" y2="516.5" stroke="#404040" stroke-width="1"/>
<line x1="1521" y1="528.5" x2="1525" y2="528.5" stroke="#404040" stroke-width="1"/>
<line x1="1521" y1="540.5" x2="1525" y2="540.5" stroke="#404040" stroke-width="1"/>
<line x1="1521" y1="552.5" x2="1525" y2="552.5" stroke="#404040" stroke-width="1"/>
<line x1="1521" y1="564.5" x2="1525" y2="564.5" stroke="#404040" stroke-width="1"/>
<line x1="1521" y1="576.5" x2="1525" y2="576.5" stroke="#404040" stroke-width="1"/>
<line x1="1521" y1="589.5" x2="1525" y2="589.5" stroke="#404040" stroke-width="1"/>
<line x1="1521" y1="601.5" x2="1525" y2="601.5" stroke="#404040" stroke-width="1"/>
<line x1="1521" y1="613.5" x2="1525" y2="613.5" stroke="#404040" stroke-width="1"/>
<line x1="1511" y1="625.5" x2="1525" y2="625.5" stroke="#404040" stroke-width="1"/>
<line x1="1521" y1="637.5" x2="1525" y2="637.5" stroke="#404040" stroke-width="1"/>
<line x1="1521" y1="649.5" x2="1525" y2="649.5" stroke="#404040" stroke-width="1"/>
<line x1="1521" y1="661.5" x2="1525" y2="661.5" stroke="#404040" stroke-width="1"/>
<line x1="1521" y1="673.5" x2="1525" y2="673.5" stroke="#404040" stroke-width="1"/>
<line x1="1521" y1="685.5" x2="1525" y2="685.5" stroke="#404040" stroke-width="1"/>
<line x1="1521" y1="697.5" x2="1525" y2="697.5" stroke="#404040" stroke-width="1"/>
<line x1="1521" y1="709.5" x2="1525" y2="709.5" stroke="#404040" stroke-width="1"/>
<line x1="1521" y1="721.5" x2="1525" y2="721.5" stroke="#404040" stroke-width="1"/>
<line x1="1521" y1="733.5" x2="1525" y2="733.5" stroke="#404040" stroke-width="1"/>
<line x1="1511" y1="746.5" x2="1525" y2="746.5" stroke="#404040" stroke-width="1"/>
<line x1="1521" y1="492.5" x2="1525" y2="492.5" stroke="#404040" stroke-width="1"/>
<line x1="1521" y1="757.5" x2="1525" y2="757.5" stroke="#404040" stroke-width="1"/>
</svg>
<div class="t" style="left:9px;top:33.7px;font-size:11px;color:#3c3c82;letter-spacing:0.9px;font-weight:normal;">[Modele : stocha 15153060 bollin]</div><div class="t" style="left:9px;top:47.0px;font-size:11px;color:#ff0000;letter-spacing:0.9px;font-weight:normal;">ICH(USD/CHF, 9, 26, 52)</div><div class="t" style="left:160.3px;top:47.0px;font-size:11px;color:#ff0000;letter-spacing:0.9px;font-weight:normal;">TL: 0,91830</div><div class="t" style="left:236.5px;top:47.0px;font-size:11px;color:#2090ff;letter-spacing:0.9px;font-weight:normal;">KL: 0,91782</div><div class="t" style="left:313.3px;top:47.0px;font-size:11px;color:#2e0e3e;letter-spacing:0.9px;font-weight:normal;">CS: 0,91769</div><div class="t" style="left:393px;top:47.0px;font-size:11px;color:#ff8000;letter-spacing:0.9px;font-weight:normal;">SA: 0,91806</div><div class="t" style="left:472.3px;top:47.0px;font-size:11px;color:#8000ff;letter-spacing:0.9px;font-weight:normal;">SB: 0,91662</div><div class="t" style="left:9px;top:59.9px;font-size:11px;color:#000000;letter-spacing:0.9px;font-weight:normal;">PIVOT(USD/CHF,Pivot)</div><div class="t" style="left:9px;top:72.8px;font-size:11px;color:#ffff00;letter-spacing:0.9px;font-weight:normal;">BB(USD/CHF.Close, 20, 2)</div><div class="t" style="left:167.6px;top:72.8px;font-size:11px;color:#ffff00;letter-spacing:0.9px;font-weight:normal;">TL: 0,91873</div><div class="t" style="left:244px;top:72.8px;font-size:11px;color:#ffff00;letter-spacing:0.9px;font-weight:normal;">BL: 0,91608</div><div class="t" style="left:320.6px;top:72.8px;font-size:11px;color:#ffff00;letter-spacing:0.9px;font-weight:normal;">AL: 0,91741</div><div class="t c" style="left:230.60000000000002px;width:200px;top:3.9px;font-size:11px;color:#34347a;letter-spacing:0.9px;text-indent:0.9px">07/10</div><div class="t c" style="left:690.5px;width:200px;top:3.9px;font-size:11px;color:#34347a;letter-spacing:0.9px;text-indent:0.9px">08/10</div><div class="t c" style="left:1150.5px;width:200px;top:3.9px;font-size:11px;color:#34347a;letter-spacing:0.9px;text-indent:0.9px">09/10</div><div class="t" style="left:1528.5px;top:101.6px;font-size:11px;color:#34347a;letter-spacing:0.75px;font-weight:normal;">0,9190</div><div class="t" style="left:1528.5px;top:180.6px;font-size:11px;color:#34347a;letter-spacing:0.75px;font-weight:normal;">0,9180</div><div class="t" style="left:1528.5px;top:259.6px;font-size:11px;color:#34347a;letter-spacing:0.75px;font-weight:normal;">0,9170</div><div class="t" style="left:1528.5px;top:337.6px;font-size:11px;color:#34347a;letter-spacing:0.75px;font-weight:normal;">0,9160</div><div class="t" style="left:1528.5px;top:416.6px;font-size:11px;color:#34347a;letter-spacing:0.75px;font-weight:normal;">0,9150</div><div class="t" style="left:1526px;top:201px;width:48px;height:16px;background:#64c8ff"></div><div class="t" style="left:1527.5px;top:204.3px;font-size:11px;color:#000000;letter-spacing:0.75px;font-weight:normal;">0,91769</div><div class="t" style="left:1px;top:471.7px;font-size:11px;color:#34347a;letter-spacing:0.95px;font-weight:normal;">06/10/2020 07:00</div><div class="t c" style="left:58.19999999999999px;width:200px;top:471.7px;font-size:11px;color:#34347a;letter-spacing:0.9px;text-indent:0.9px">15:00</div><div class="t c" style="left:173.2px;width:200px;top:471.7px;font-size:11px;color:#34347a;letter-spacing:0.9px;text-indent:0.9px">21:00</div><div class="t c" style="left:288.2px;width:200px;top:471.7px;font-size:11px;color:#34347a;letter-spacing:0.9px;text-indent:0.9px">07/10 03:00</div><div class="t c" style="left:403.2px;width:200px;top:471.7px;font-size:11px;color:#34347a;letter-spacing:0.9px;text-indent:0.9px">09:00</div><div class="t c" style="left:518.2px;width:200px;top:471.7px;font-size:11px;color:#34347a;letter-spacing:0.9px;text-indent:0.9px">15:00</div><div class="t c" style="left:633.2px;width:200px;top:471.7px;font-size:11px;color:#34347a;letter-spacing:0.9px;text-indent:0.9px">21:00</div><div class="t c" style="left:748.2px;width:200px;top:471.7px;font-size:11px;color:#34347a;letter-spacing:0.9px;text-indent:0.9px">08/10 03:00</div><div class="t c" style="left:863.2px;width:200px;top:471.7px;font-size:11px;color:#34347a;letter-spacing:0.9px;text-indent:0.9px">09:00</div><div class="t c" style="left:978.2px;width:200px;top:471.7px;font-size:11px;color:#34347a;letter-spacing:0.9px;text-indent:0.9px">15:00</div><div class="t c" style="left:1093.2px;width:200px;top:471.7px;font-size:11px;color:#34347a;letter-spacing:0.9px;text-indent:0.9px">21:00</div><div class="t c" style="left:1208.2px;width:200px;top:471.7px;font-size:11px;color:#34347a;letter-spacing:0.9px;text-indent:0.9px">09/10 03:00</div><div class="t c" style="left:1323.2px;width:200px;top:471.7px;font-size:11px;color:#34347a;letter-spacing:0.9px;text-indent:0.9px">09:00</div><div class="t" style="left:8.3px;top:493.5px;font-size:11px;color:#ff0000;letter-spacing:0.89px;font-weight:normal;">STOCHASTIC(USD/CHF.m30, 5, 3, 3, MVA, MVA)(Disabled)</div><div class="t" style="left:8.3px;top:507.2px;font-size:11px;color:#2a8c8c;letter-spacing:0.89px;font-weight:normal;">STOCHASTIC(USD/CHF, 5, 3, 3, MVA, MVA)&nbsp; K: 14,62&nbsp; D: 33,08</div><div class="t" style="left:8.3px;top:520.2px;font-size:11px;color:#1010f0;letter-spacing:0.89px;font-weight:normal;">STOCHASTIC(USD/CHF.m5, 5, 3, 3, MVA, MVA)(Disabled)</div><div class="t" style="left:8.3px;top:533.2px;font-size:11px;color:#ff88ff;letter-spacing:0.89px;font-weight:normal;">STOCHASTIC(USD/CHF, 5, 3, 3, MVA, MVA)&nbsp; K: 14,62&nbsp; D: 33,08</div><div class="t" style="left:8.3px;top:546.3px;font-size:11px;color:#00ee44;letter-spacing:0.89px;font-weight:normal;">STOCHASTIC(USD/CHF.m15, 5, 3, 3, MVA, MVA)(Disabled)</div><div class="t" style="left:1528px;top:499px;width:21px;height:13px;background:#9a9a9a"></div><div class="t" style="left:1528.5px;top:500.8px;font-size:11px;color:#000000;letter-spacing:0.4px;font-weight:normal;">100</div><div class="t" style="left:1528px;top:547px;width:14px;height:13px;background:#ff5555"></div><div class="t" style="left:1528.5px;top:548.8px;font-size:11px;color:#000000;letter-spacing:0.4px;font-weight:normal;">80</div><div class="t" style="left:1528.5px;top:621.0px;font-size:11px;color:#34347a;letter-spacing:0.4px;font-weight:normal;">50,00</div><div class="t" style="left:1528px;top:693px;width:14px;height:13px;background:#ff5555"></div><div class="t" style="left:1528.5px;top:694.5px;font-size:11px;color:#000000;letter-spacing:0.4px;font-weight:normal;">20</div><div class="t" style="left:1528px;top:741px;width:7px;height:13px;background:#9a9a9a"></div><div class="t" style="left:1528.5px;top:742.5px;font-size:11px;color:#000000;letter-spacing:0.4px;font-weight:normal;">0</div><div class="t" style="left:1355px;top:743px;width:155px;height:15px;background:#fff"></div><div class="t" style="left:1355.5px;top:746.5px;font-size:11px;color:#34347a;letter-spacing:0.79px;font-weight:normal;">FXCM Marketscope © 2020</div>
</body></html>
